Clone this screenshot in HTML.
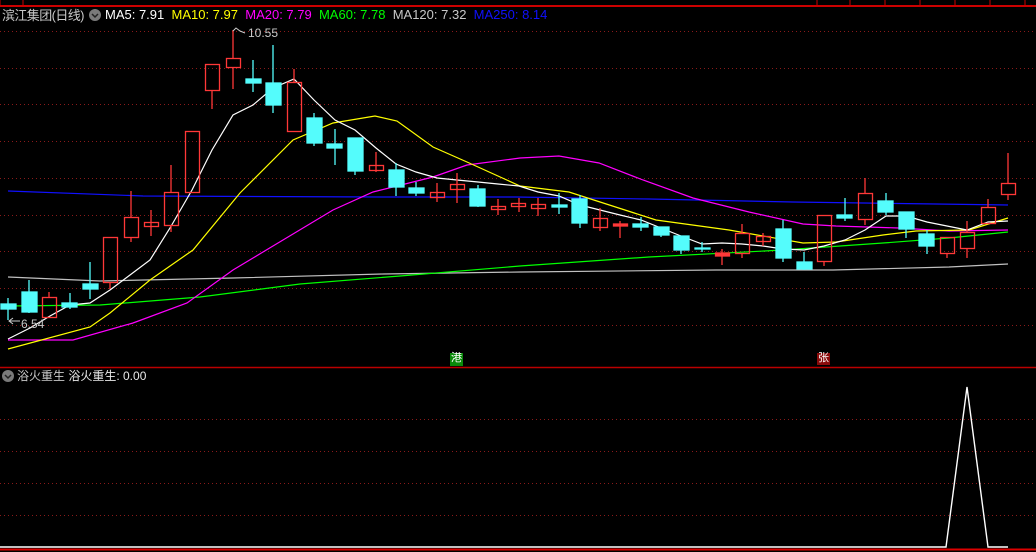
<!DOCTYPE html>
<html><head><meta charset="utf-8"><style>
html,body{margin:0;padding:0;background:#000;}
body{width:1036px;height:552px;overflow:hidden;position:relative;font-family:"Liberation Sans","Noto Sans CJK SC",sans-serif;}
svg{position:absolute;left:0;top:0;}
.t{position:absolute;font-size:13px;white-space:nowrap;line-height:16px;}
</style></head><body>
<svg width="1036" height="552" viewBox="0 0 1036 552">
<g stroke="#8a1a1a" stroke-width="1" stroke-dasharray="1,3">
<line x1="0" y1="31.5" x2="1036" y2="31.5"/><line x1="0" y1="68.5" x2="1036" y2="68.5"/><line x1="0" y1="104.5" x2="1036" y2="104.5"/><line x1="0" y1="141.5" x2="1036" y2="141.5"/><line x1="0" y1="178.5" x2="1036" y2="178.5"/><line x1="0" y1="215.5" x2="1036" y2="215.5"/><line x1="0" y1="251.5" x2="1036" y2="251.5"/><line x1="0" y1="288.5" x2="1036" y2="288.5"/><line x1="0" y1="325.5" x2="1036" y2="325.5"/>
<line x1="0" y1="419.5" x2="1036" y2="419.5"/><line x1="0" y1="451.5" x2="1036" y2="451.5"/><line x1="0" y1="483.5" x2="1036" y2="483.5"/><line x1="0" y1="515.5" x2="1036" y2="515.5"/>
</g>
<line x1="0" y1="6" x2="1036" y2="6" stroke="#c00" stroke-width="2"/>
<rect x="0" y="-2" width="23" height="8" fill="none" stroke="#c00"/>
<g stroke="#c00"><line x1="817" y1="0" x2="817" y2="6"/><line x1="850" y1="0" x2="850" y2="6"/><line x1="885" y1="0" x2="885" y2="6"/><line x1="920" y1="0" x2="920" y2="6"/><line x1="955" y1="0" x2="955" y2="6"/><line x1="990" y1="0" x2="990" y2="6"/><line x1="1025" y1="0" x2="1025" y2="6"/></g>
<line x1="0" y1="367.5" x2="1036" y2="367.5" stroke="#b00" stroke-width="1.5"/>
<line x1="0" y1="549.5" x2="1036" y2="549.5" stroke="#d00" stroke-width="2"/>
<g fill="none" stroke-width="1.2">
<polyline stroke="#1010ff" points="8,191 143,196 383,197 516,197 649,199 793,202 936,204 1008,205"/>
<polyline stroke="#c0c0c0" points="8,277 100,281 233,278 383,274 520,272 716,270 833,270 949,267 1008,264"/>
<polyline stroke="#00ff00" points="8,306 100,305 200,297 300,284 400,276 520,266 649,257 783,250 883,243 949,238 1008,232"/>
<polyline stroke="#ff00ff" points="8,340 73,340 133,323 187,303 233,270 283,240 333,210 373,192 433,177 467,165 520,158 559,156 599,163 643,180 693,198 749,212 803,224 836,226 899,228 949,231 1008,230"/>
<polyline stroke="#ffff00" points="8,349 90,327 110,313 150,280 193,250 240,193 293,140 333,123 375,116 397,121 433,147 467,162 520,186 569,192 656,220 729,230 803,243 836,242 883,235 916,231 969,230 1008,218"/>
<polyline stroke="#ffffff" points="8,339 30,328 50,316 70,305 90,303 110,290 130,275 150,260 170,228 192,190 212,150 233,115 253,105 273,88 294,79 314,100 335,120 355,130 376,148 396,164 416,172 437,178 457,180 478,182 498,184 519,186 538,192 559,196 580,205 600,210 620,215 641,220 661,228 681,236 702,244 722,243 742,244 763,246 783,249 804,250 824,246 845,240 865,230 886,216 906,216 927,222 947,226 967,230 988,222 1008,221"/>
</g>
<g stroke="#ff3838" fill="none" stroke-width="1.3">
<line x1="49" y1="292" x2="49" y2="297"/><rect x="42.5" y="297.5" width="14" height="20"/>
<line x1="110" y1="282" x2="110" y2="289"/><rect x="103.5" y="237.5" width="14" height="45"/>
<line x1="131" y1="191" x2="131" y2="217"/><line x1="131" y1="237" x2="131" y2="242"/><rect x="124.5" y="217.5" width="14" height="20"/>
<line x1="151" y1="210" x2="151" y2="236"/><rect x="144.5" y="222.5" width="14" height="4"/>
<line x1="171" y1="165" x2="171" y2="192"/><line x1="171" y1="225" x2="171" y2="232"/><rect x="164.5" y="192.5" width="14" height="33"/>
<rect x="185.5" y="131.5" width="14" height="61"/>
<line x1="212" y1="90" x2="212" y2="109"/><rect x="205.5" y="64.5" width="14" height="26"/>
<line x1="233" y1="30" x2="233" y2="58"/><line x1="233" y1="67" x2="233" y2="89"/><rect x="226.5" y="58.5" width="14" height="9"/>
<line x1="294" y1="69" x2="294" y2="82"/><rect x="287.5" y="82.5" width="14" height="49"/>
<line x1="376" y1="152" x2="376" y2="172"/><rect x="369.5" y="165.5" width="14" height="5"/>
<line x1="437" y1="183" x2="437" y2="202"/><rect x="430.5" y="192.5" width="14" height="5"/>
<line x1="457" y1="173" x2="457" y2="203"/><rect x="450.5" y="184.5" width="14" height="5"/>
<line x1="498" y1="199" x2="498" y2="215"/><rect x="491.5" y="206.5" width="14" height="3"/>
<line x1="519" y1="198" x2="519" y2="212"/><rect x="511.5" y="203.5" width="14" height="3"/>
<line x1="538" y1="198" x2="538" y2="216"/><rect x="531.5" y="204.5" width="14" height="4"/>
<line x1="600" y1="208" x2="600" y2="231"/><rect x="593.5" y="218.5" width="14" height="9"/>
<line x1="620" y1="221" x2="620" y2="238"/><rect x="613.5" y="224" width="14" height="2" fill="#ff3838"/>
<line x1="722" y1="249" x2="722" y2="265"/><rect x="715.5" y="253" width="14" height="3" fill="#ff3838"/>
<line x1="742" y1="224" x2="742" y2="233"/><line x1="742" y1="253" x2="742" y2="258"/><rect x="735.5" y="233.5" width="14" height="20"/>
<line x1="763" y1="233" x2="763" y2="246"/><rect x="756.5" y="236.5" width="14" height="5"/>
<line x1="824" y1="261" x2="824" y2="266"/><rect x="817.5" y="215.5" width="14" height="46"/>
<line x1="865" y1="178" x2="865" y2="193"/><line x1="865" y1="219" x2="865" y2="225"/><rect x="858.5" y="193.5" width="14" height="26"/>
<line x1="947" y1="253" x2="947" y2="258"/><rect x="940.5" y="237.5" width="14" height="16"/>
<line x1="967" y1="221" x2="967" y2="232"/><line x1="967" y1="248" x2="967" y2="258"/><rect x="960.5" y="232.5" width="14" height="16"/>
<line x1="988" y1="199" x2="988" y2="207"/><rect x="981.5" y="207.5" width="14" height="16"/>
<line x1="1008" y1="153" x2="1008" y2="183"/><line x1="1008" y1="194" x2="1008" y2="200"/><rect x="1001.5" y="183.5" width="14" height="11"/>
</g>
<g stroke="#54fcfc" fill="#54fcfc" stroke-width="1.3">
<line x1="8" y1="298" x2="8" y2="320"/><rect x="1" y="304" width="15" height="5"/>
<line x1="29" y1="280" x2="29" y2="313"/><rect x="22" y="292" width="15" height="20"/>
<line x1="70" y1="293" x2="70" y2="309"/><rect x="62" y="303" width="15" height="4"/>
<line x1="90" y1="262" x2="90" y2="299"/><rect x="83" y="284" width="15" height="5"/>
<line x1="253" y1="60" x2="253" y2="92"/><rect x="246" y="79" width="15" height="4"/>
<line x1="273" y1="45" x2="273" y2="113"/><rect x="266" y="83" width="15" height="22"/>
<line x1="314" y1="113" x2="314" y2="146"/><rect x="307" y="118" width="15" height="25"/>
<line x1="335" y1="129" x2="335" y2="165"/><rect x="327" y="144" width="15" height="4"/>
<line x1="355" y1="138" x2="355" y2="175"/><rect x="348" y="138" width="15" height="33"/>
<line x1="396" y1="163" x2="396" y2="196"/><rect x="389" y="170" width="15" height="17"/>
<line x1="416" y1="182" x2="416" y2="196"/><rect x="409" y="188" width="15" height="5"/>
<line x1="478" y1="185" x2="478" y2="207"/><rect x="470" y="189" width="15" height="17"/>
<line x1="559" y1="193" x2="559" y2="214"/><rect x="552" y="205" width="15" height="2"/>
<line x1="580" y1="195" x2="580" y2="228"/><rect x="572" y="199" width="15" height="24"/>
<line x1="641" y1="217" x2="641" y2="231"/><rect x="633" y="224" width="15" height="3"/>
<line x1="661" y1="227" x2="661" y2="237"/><rect x="654" y="227" width="15" height="8"/>
<line x1="681" y1="236" x2="681" y2="254"/><rect x="674" y="236" width="15" height="14"/>
<line x1="702" y1="242" x2="702" y2="252"/><rect x="695" y="248" width="15" height="1"/>
<line x1="783" y1="220" x2="783" y2="262"/><rect x="776" y="229" width="15" height="29"/>
<line x1="804" y1="252" x2="804" y2="270"/><rect x="797" y="262" width="15" height="7"/>
<line x1="845" y1="198" x2="845" y2="221"/><rect x="837" y="215" width="15" height="3"/>
<line x1="886" y1="193" x2="886" y2="215"/><rect x="878" y="201" width="15" height="11"/>
<line x1="906" y1="212" x2="906" y2="238"/><rect x="899" y="212" width="15" height="17"/>
<line x1="927" y1="230" x2="927" y2="254"/><rect x="919" y="234" width="15" height="12"/>
</g>
<polyline points="233,31 236,28 240,31 245,33" fill="none" stroke="#ccc" stroke-width="1"/>
<polyline points="13,318 9,321 13,324" fill="none" stroke="#ccc" stroke-width="1"/>
<line x1="9" y1="321" x2="20" y2="321" stroke="#ccc"/>
<rect x="450" y="353" width="13" height="13" fill="#0a8a0a"/>
<rect x="817" y="353" width="13" height="12" fill="#8a0a0a"/>
<polyline points="0,547 946,547 967,387 988,547 1008,547" fill="none" stroke="#fff" stroke-width="1.4"/>
<circle cx="95" cy="15" r="6" fill="#7a7a7a"/><polyline points="92,14 95,17 98,14" fill="none" stroke="#222" stroke-width="1.5"/>
<circle cx="8" cy="376" r="6" fill="#7a7a7a"/><polyline points="5,375 8,378 11,375" fill="none" stroke="#222" stroke-width="1.5"/>
</svg>
<div class="t" style="left:2px;top:8px;color:#c8c8c8;font-size:13px;letter-spacing:-0.6px;">滨江集团(日线)</div>
<div class="t" style="left:105px;top:7px;"><span style="color:#fff">MA5: 7.91</span>&nbsp;&nbsp;<span style="color:#ff0">MA10: 7.97</span>&nbsp;&nbsp;<span style="color:#f0f">MA20: 7.79</span>&nbsp;&nbsp;<span style="color:#0f0">MA60: 7.78</span>&nbsp;&nbsp;<span style="color:#c8c8c8">MA120: 7.32</span>&nbsp;&nbsp;<span style="color:#1010ff">MA250: 8.14</span></div>
<div class="t" style="left:248px;top:25px;color:#c8c8c8;font-size:12px;">10.55</div>
<div class="t" style="left:21px;top:316px;color:#c8c8c8;font-size:12px;">6.54</div>
<div class="t" style="left:451px;top:352px;color:#fff;font-size:11px;line-height:13px;">港</div>
<div class="t" style="left:818px;top:352px;color:#fff;font-size:11px;line-height:13px;">张</div>
<div class="t" style="left:17px;top:368px;color:#c8c8c8;font-size:12px;">浴火重生&nbsp;<span style="color:#e8e8e8">浴火重生: 0.00</span></div>
</body></html>
